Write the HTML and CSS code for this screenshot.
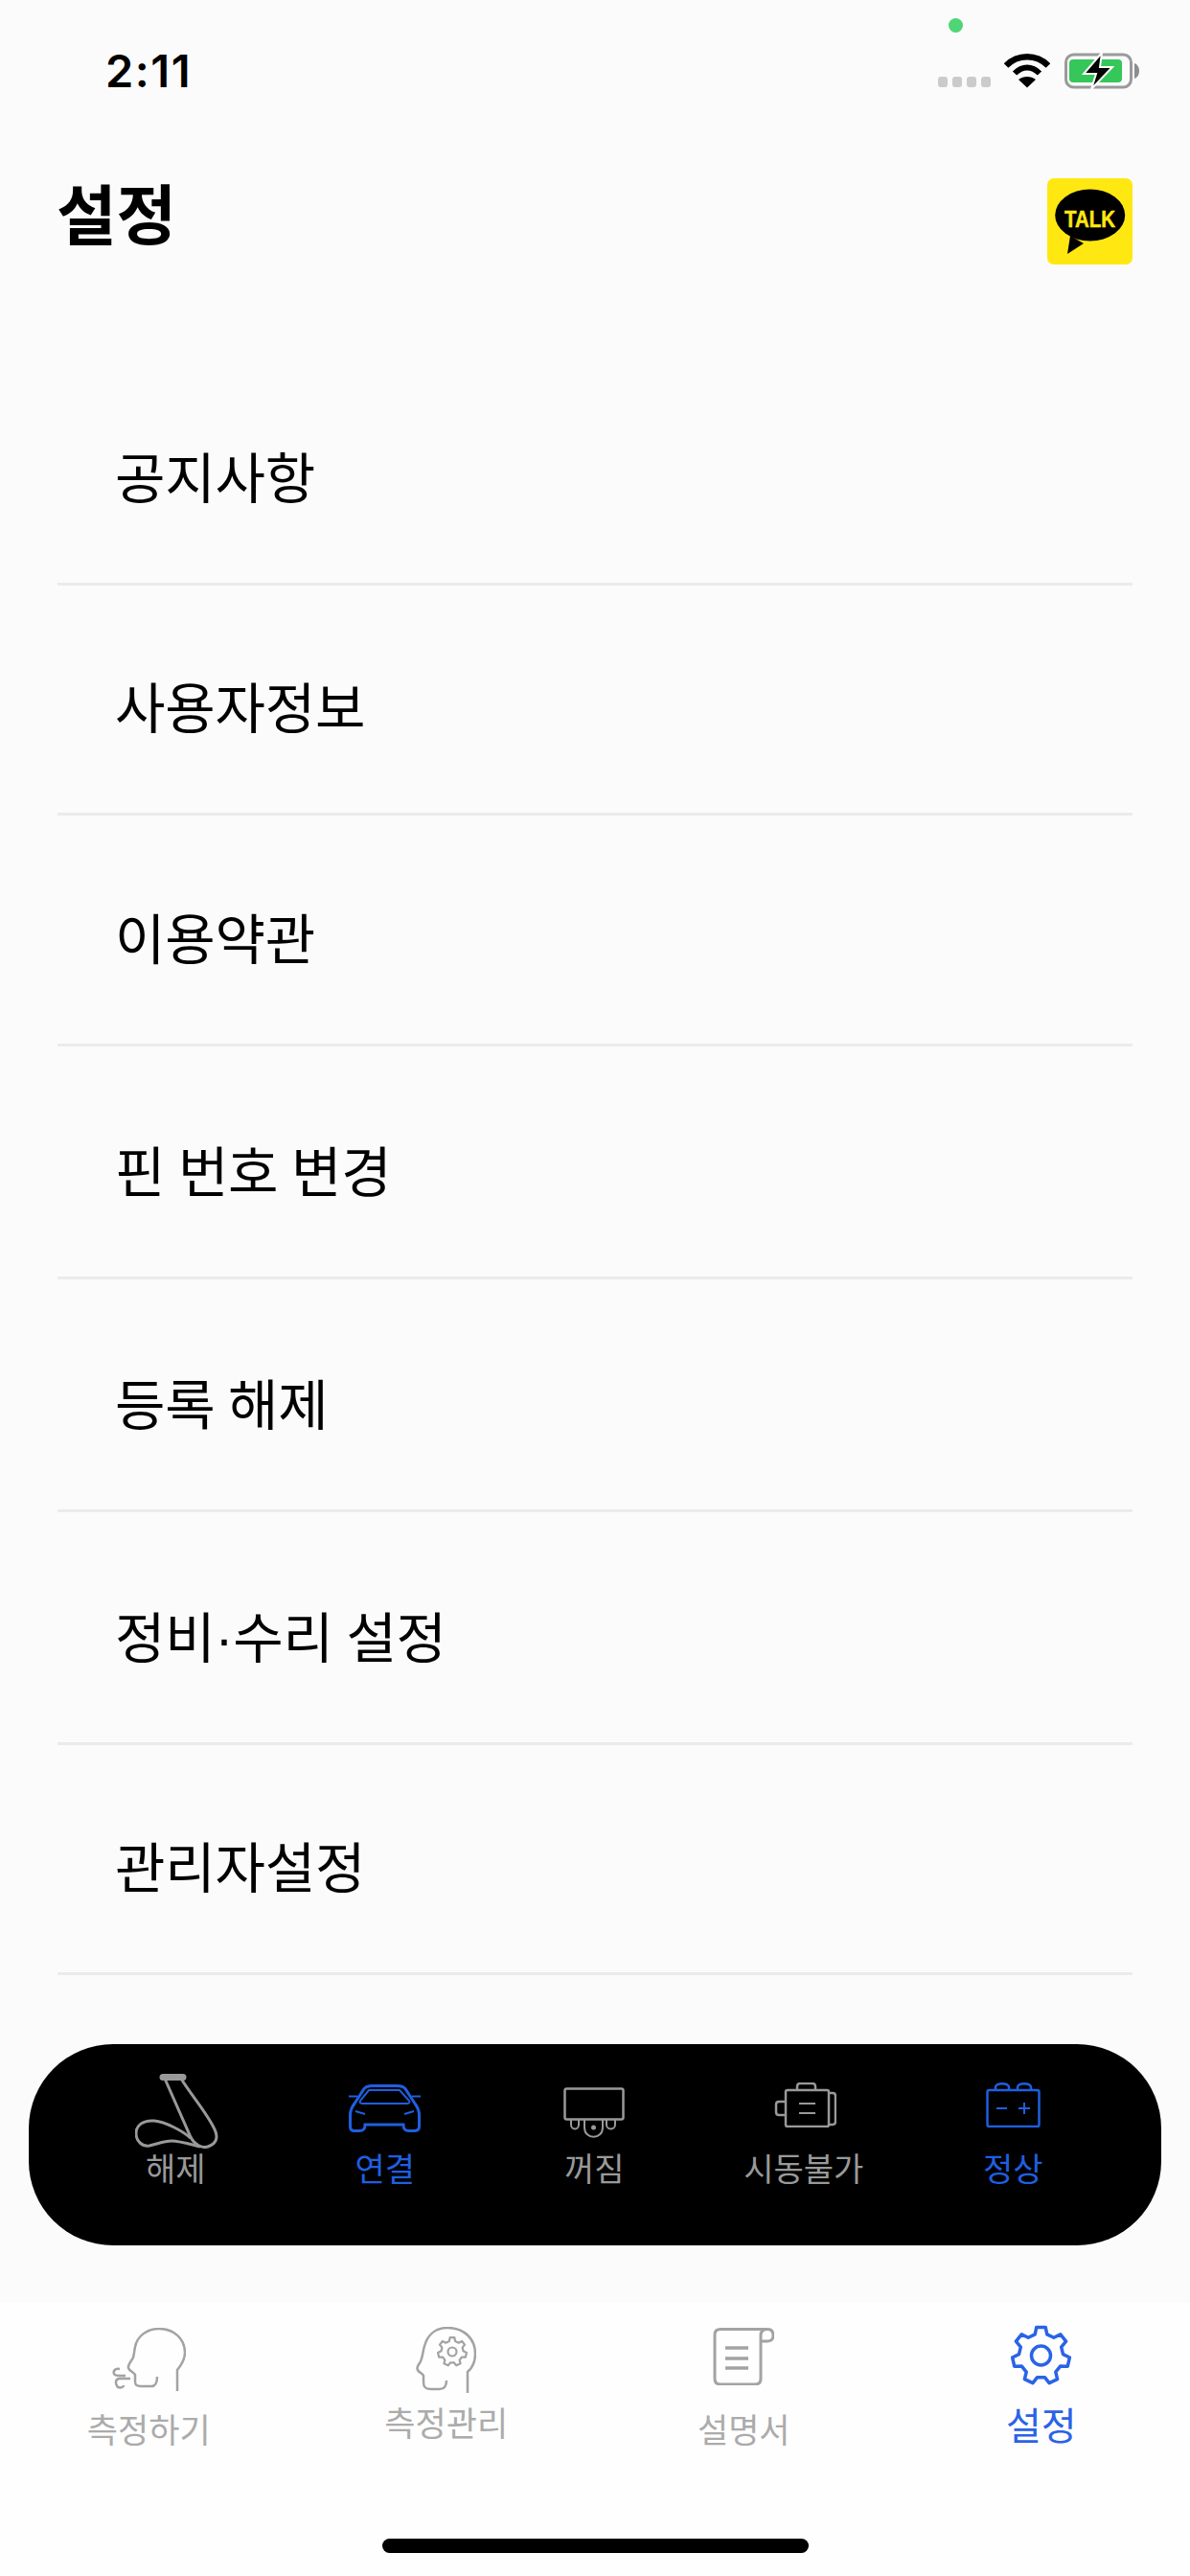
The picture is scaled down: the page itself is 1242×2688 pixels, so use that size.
FILE: index.html
```html
<!DOCTYPE html>
<html lang="ko">
<head>
<meta charset="utf-8">
<title>설정</title>
<link rel="stylesheet" href="styles.css">
</head>
<body>
<div class="screen">
  <div class="status">
    <span class="time">2:11</span>
    <span class="dot"></span>
    <div class="status-icons">
      <div class="signal"><i></i><i></i><i></i><i></i></div>
      <svg class="wifi" width="48" height="37" viewBox="0 0 48 37"><path d="M2 13.500C14 1 34 1 46 13.500" fill="none" stroke="#000" stroke-width="6.500"/><path d="M11 21.500C19 13.500 29 13.500 37 21.500" fill="none" stroke="#000" stroke-width="6"/><path d="M24 36.500L15 28C20 24 28 24 33 28Z" fill="#000"/></svg>
      <svg class="battery" width="80" height="38" viewBox="0 0 80 38"><rect x="1.500" y="2" width="68" height="34" rx="8" fill="none" stroke="#9a9a9a" stroke-width="3"/><rect x="5" y="7" width="55" height="24" rx="4" fill="#35c759"/><path d="M73 11c3 1 5 4 5 8s-2 7-5 8z" fill="#8e8e8e"/><path d="M39 0L20 22H33L28 38L50 15H37Z" fill="#000" stroke="#fbfbfb" stroke-width="2"/></svg>
    </div>
  </div>
  <header class="top">
    <h1>설정</h1>
    <svg class="talk" width="89" height="90" viewBox="0 0 89 90"><rect width="89" height="90" rx="7" fill="#ffe812"/><ellipse cx="44.700" cy="38.500" rx="36.500" ry="27" fill="#000"/><path d="M24 60L21 79L38 68Z" fill="#000"/><text x="18" y="51" class="talk-text" textLength="53" lengthAdjust="spacingAndGlyphs">TALK</text></svg>
  </header>
  <main class="list">
    <div class="row r1">공지사항</div>
    <div class="row r2">사용자정보</div>
    <div class="row r3">이용약관</div>
    <div class="row r4">핀 번호 변경</div>
    <div class="row r5">등록 해제</div>
    <div class="row r6">정비·수리 설정</div>
    <div class="row r7">관리자설정</div>
  </main>
  <section class="pill">
    <div class="pi">
      <div class="pi-icon"><svg class="belt" width="88" height="78" viewBox="0 0 88 78"><g fill="none" stroke="#999" stroke-width="3"><path d="M31 5L58 66C62 74 70 78 76 76C85 73 87 66 83 58C76 42 57 20 48 5"/><path d="M29 3.500H50" stroke-width="7" stroke-linecap="round"/><path d="M58 67C50 60 32 50 20 49C8 48 1 54 1 62C1 71 8 76 15 75C24 73 30 70 38 70C46 70 56 73 68 76"/></g></svg></div>
      <span class="g">해제</span>
    </div>
    <div class="pi">
      <div class="pi-icon"><svg class="car" width="75" height="50" viewBox="0 0 75 50"><g fill="none" stroke="#1f5fe0" stroke-width="3"><path d="M6 20L15 6C17 2 21 1.500 25 1.500H50C54 1.500 58 2 60 6L69 20C72 24 73.500 27 73.500 32V44C73.500 47 72 48.500 68 48.500H63C59 48.500 57 47 57 42H17C17 47 15 48.500 11 48.500H6C3 48.500 1.500 47 1.500 44V32C1.500 27 3 24 6 20Z"/><path d="M21 6H53L63 17C64 19 63 20 61 20H14C12 20 11 19 12 17Z" stroke-width="2"/><path d="M0 12.500H9M66 12.500H75M7 28L17 31M68 28L58 31" stroke-width="2"/></g></svg></div>
      <span class="b">연결</span>
    </div>
    <div class="pi">
      <div class="pi-icon"><svg class="off" width="64" height="53" viewBox="0 0 64 53"><g fill="none" stroke="#999" stroke-width="2.500"><rect x="1.500" y="1.500" width="61" height="32" rx="2"/><path d="M8 33V39C8 45 16 45 16 39V33M45 33V39C45 45 54 45 54 39V33" stroke-width="2"/><path d="M22 33V42C22 55 41 55 41 42V33" stroke-width="2"/></g><circle cx="31.500" cy="42" r="2.500" fill="#999"/></svg></div>
      <span class="g">꺼짐</span>
    </div>
    <div class="pi">
      <div class="pi-icon"><svg class="engine" width="68" height="47" viewBox="0 0 68 47"><g fill="none" stroke="#999" stroke-width="2.500"><rect x="15" y="8" width="45" height="38" rx="2"/><path d="M27 8V4C27 2 28 1 30 1H43C45 1 46 2 46 4V8"/><path d="M60 11H64C66 11 67 12 67 14V41C67 43 66 44 64 44H60"/><path d="M15 20H8C6 20 5 21 5 23V31C5 33 6 34 8 34H15"/><path d="M29 22H46M29 32H46" stroke-width="2"/></g></svg></div>
      <span class="g">시동불가</span>
    </div>
    <div class="pi">
      <div class="pi-icon"><svg class="batt" width="57" height="47" viewBox="0 0 57 47"><g fill="none" stroke="#1f5fe0" stroke-width="2.500"><rect x="1.500" y="8" width="54" height="38" rx="2"/><path d="M10 8V5C10 0 24 0 24 5V8M33 8V5C33 0 47 0 47 5V8"/><path d="M11 27H22M34 27H46M40 21V33" stroke-width="2"/></g></svg></div>
      <span class="b">정상</span>
    </div>
  </section>
  <nav class="tabs">
    <div class="tab t1"><svg width="77" height="66" viewBox="0 0 77 66"><g fill="none" stroke="#a3a3a3" stroke-width="2.500"><path d="M68 66V44C73 38 76 33 76 26C76 11 64 1 49 1C36 1 26 9 24 20C23 25 23 28 22 31C20 35 16 39 17 42C18 45 22 46 24 49V56C24 60 26 61 30 61H41C45 61 47 58 47 51"/><path d="M8 43C3 42 1 45 2 48C3 50 5 50 8 50H14M19 53H8C3 53 3 59 6 62C9 63 12 62 12 60"/></g></svg><span>측정하기</span></div>
    <div class="tab t2"><svg width="63" height="69" viewBox="0 0 63 69"><g fill="none" stroke="#a3a3a3" stroke-width="2.500"><path d="M54 69V47C60 42 62 35 62 28C62 12 50 1 33 1C20 1 12 9 9 20C7 27 7 32 5 36C3 40 0 42 2 45C3 48 7 48 8 51V58C8 63 10 65 16 65H24C29 65 32 63 32 56"/><circle cx="38" cy="26" r="4.500" stroke-width="2.200"/><polygon transform="translate(38 26) scale(.5)" stroke-width="4.500" stroke-linejoin="round" points="-6.300,-22.100 -4.700,-29.600 4.700,-29.600 6.300,-22.100 13.300,-18.700 20.300,-22.100 26.100,-14.800 21.200,-8.800 23,-1.300 29.900,2 27.800,11.200 20.100,11.100 15.300,17.200 17.100,24.700 8.600,28.700 3.900,22.700 -3.900,22.700 -8.600,28.700 -17.100,24.700 -15.300,17.200 -20.100,11.100 -27.800,11.200 -29.900,2 -23,-1.300 -21.200,-8.800 -26.100,-14.800 -20.300,-22.100 -13.300,-18.700"/></g></svg><span>측정관리</span></div>
    <div class="tab t3"><svg width="64" height="60" viewBox="0 0 64 60"><g fill="none" stroke="#a3a3a3" stroke-width="3"><path d="M56 1.500H8C4 1.500 2 3 2 7V53C2 57 4 59 8 59H44C48 59 50 57 50 53V8C50 4 52 1.500 57 1.500C61 1.500 63 4 63 8C63 12 61 14 57 14H50"/><path d="M13 21H37M13 32H37M13 42H37" stroke-width="3.500"/></g></svg><span>설명서</span></div>
    <div class="tab t4"><svg width="63" height="63" viewBox="0 0 63 63"><g fill="none" stroke="#2a63e6" stroke-width="3.500" stroke-linejoin="round"><circle cx="31.500" cy="32" r="10"/><polygon transform="translate(31.500 32)" points="-6.300,-22.100 -4.700,-29.600 4.700,-29.600 6.300,-22.100 13.300,-18.700 20.300,-22.100 26.100,-14.800 21.200,-8.800 23,-1.300 29.900,2 27.800,11.200 20.100,11.100 15.300,17.200 17.100,24.700 8.600,28.700 3.900,22.700 -3.900,22.700 -8.600,28.700 -17.100,24.700 -15.300,17.200 -20.100,11.100 -27.800,11.200 -29.900,2 -23,-1.300 -21.200,-8.800 -26.100,-14.800 -20.300,-22.100 -13.300,-18.700"/></g></svg><span class="on">설정</span></div>
    <div class="home"></div>
  </nav>
</div>
</body>
</html>
```
FILE: styles.css
```css
* { box-sizing: border-box; margin: 0; padding: 0; }
html, body { width: 1242px; height: 2688px; overflow: hidden; }
body { background: #fbfbfb; font-family: "Liberation Sans", "Noto Sans CJK KR", sans-serif; color: #000; }
.screen { width: 1242px; height: 2688px; display: flex; flex-direction: column; }
svg { display: block; flex: none; }

.status { position: relative; height: 186px; flex: none; display: flex; justify-content: space-between; align-items: flex-start; padding: 55px 51px 0 110px; }
.time { font-family: Inter, "Liberation Sans", sans-serif; font-size: 47px; line-height: 46px; font-weight: 600; letter-spacing: 1.5px; margin-top: -4px; }
.dot { position: absolute; left: 990px; top: 19px; width: 15px; height: 15px; border-radius: 50%; background: #4fd575; }
.status-icons { display: flex; align-items: flex-start; }
.signal { display: flex; gap: 5px; margin: 25px 14px 0 0; }
.signal i { width: 10px; height: 11px; border-radius: 3px; background: #cbcbcb; }
.wifi { margin-right: 15px; }

.top { display: flex; justify-content: space-between; align-items: flex-start; padding: 0 60px 0 59px; height: 215px; flex: none; }
h1 { font-size: 68px; line-height: 80px; font-weight: 700; }
.talk-text { font: 700 24px "Liberation Sans", sans-serif; fill: #ffe812; stroke: #ffe812; stroke-width: .5px; }

.list { padding: 0 60px; flex: none; }
.row { display: flex; align-items: flex-end; padding: 0 0 76px 60px; font-size: 57px; line-height: 64px; letter-spacing: -0.2px; word-spacing: -2px; border-bottom: 3px solid #ebebeb; }
.r1 { height: 210px; }
.r2 { height: 240px; }
.r3 { height: 241px; }
.r4, .r5, .r6 { height: 243px; }
.r7 { height: 240px; }

.pill { flex: none; margin: 72px 30px 0; height: 210px; border-radius: 88px; background: #000; display: grid; grid-template-columns: repeat(5, 218.5px); padding: 31px 0 0 44px; align-content: start; }
.pi { display: flex; flex-direction: column; align-items: center; }
.pi-icon { height: 80px; width: 100%; display: flex; justify-content: center; align-items: flex-start; }
.pi span { font-size: 34px; line-height: 40px; }
.pi .g { color: #999; }
.pi .b { color: #1f5fe0; }
.belt { margin-left: 4px; }
.car { margin-top: 11px; }
.off { margin-top: 14px; }
.engine, .batt { margin-top: 9px; }

.tabs { flex: none; margin-top: 60px; height: 286px; background: #fefefe; display: grid; grid-template-columns: repeat(4, 310.5px); grid-template-rows: 246px 15px; }
.tab { display: flex; flex-direction: column; align-items: center; }
.tab span { font-size: 35px; line-height: 40px; color: #ababab; }
.tab .on { color: #2a63e6; font-size: 40px; }
.t1 { padding-top: 26px; }
.t1 span { margin-top: 22px; }
.t2 { padding-top: 25px; }
.t2 span { margin-top: 13px; }
.t3 { padding-top: 26px; }
.t3 span { margin-top: 28px; }
.t4 { padding-top: 23px; }
.t4 span { margin-top: 23px; }
.home { grid-column: 1 / -1; justify-self: center; width: 445px; height: 15px; border-radius: 8px; background: #000; }
```
